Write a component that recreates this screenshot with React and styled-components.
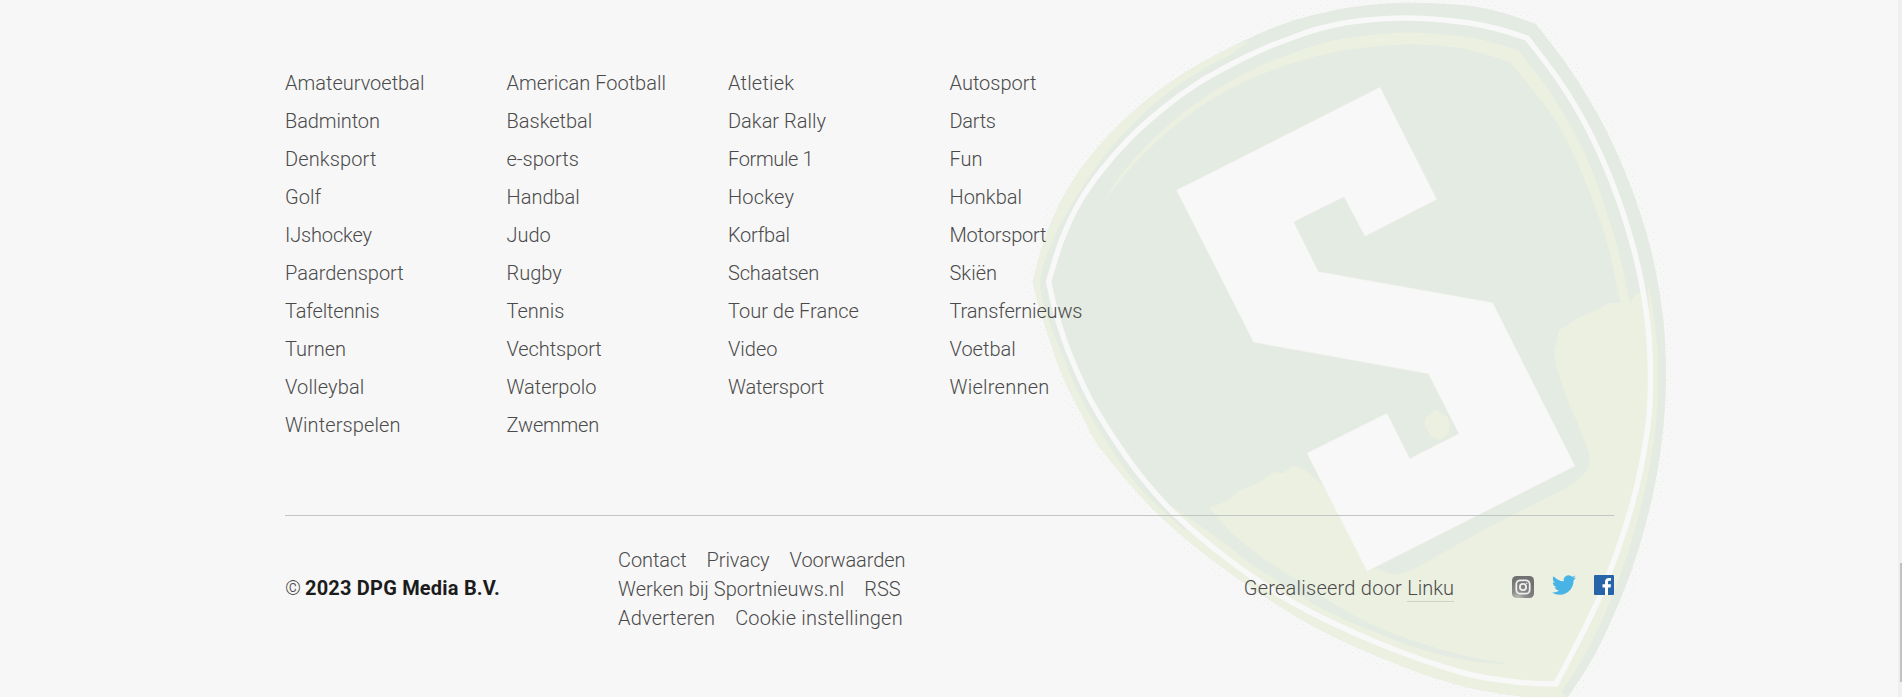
import React from 'react';
import styled, { createGlobalStyle } from 'styled-components';

const GlobalStyle = createGlobalStyle`
  *, *::before, *::after { box-sizing: border-box; }
  html, body { margin: 0; height: 100%; overflow: hidden; background: #f7f7f7; }
`;

const Page = styled.footer`
  position: relative;
  height: 697px;
  overflow: hidden;
  background: #f7f7f7;
  color: #4a4a4a;
  font: 300 20px/38px Roboto, 'Liberation Sans', sans-serif;
`;

const Watermark = styled.svg`
  position: absolute;
  top: 0;
  left: 1000px;
  width: 700px;
  height: 697px;
`;

const Container = styled.div`
  position: relative;
  width: 1329px;
  margin-left: 285px;
  padding-top: 64px;
`;

const Sports = styled.ul`
  display: grid;
  grid-template-columns: repeat(6, 1fr);
  grid-auto-rows: 38px;
  margin: 0;
  padding: 0 0 71px;
  list-style: none;
  border-bottom: 1px solid #c0c6c1;
`;

const SportItem = styled.li`
  grid-column: ${(p) => p.$column};
  white-space: nowrap;
  letter-spacing: ${(p) => p.$track || 0}px;
`;

const Link = styled.a`
  color: inherit;
  text-decoration: none;
`;

const Bottom = styled.div`
  display: flex;
  align-items: flex-start;
  padding-top: 30px;
  line-height: 29px;
`;

const Copyright = styled.div`
  display: flex;
  gap: 4px;
  width: 333px;
  margin-top: 28px;

  span {
    font-size: 20px;
  }

  strong {
    color: #1c1c1c;
    font-weight: 700;
    letter-spacing: 0.2px;
  }
`;

const MetaLinks = styled.nav`
  display: flex;
  flex-direction: column;
  flex: 1;
`;

const MetaRow = styled.div`
  display: flex;
  gap: 20px;
  letter-spacing: ${(p) => p.$track || 0}px;
`;

const Credits = styled.div`
  margin: 28px 58px 0 0;
  letter-spacing: 0.24px;
`;

const CreditLink = styled(Link)`
  display: inline-block;
  height: 28px;
  border-bottom: 1px solid #ccd1c6;
  letter-spacing: 0;
`;

const Socials = styled.div`
  display: flex;
  align-items: flex-start;
  margin-top: 29px;
`;

const SocialIcon = styled.svg`
  display: block;
  width: ${(p) => p.$width}px;
  height: ${(p) => p.$height}px;
  margin-left: ${(p) => p.$gap || 0}px;
  margin-top: ${(p) => p.$drop || 0}px;
`;

const ScrollTrack = styled.div`
  position: absolute;
  top: 0;
  right: 0;
  width: 4px;
  height: 100%;
  padding: 563px 0 0 2px;
  background: #efefef;
`;

const ScrollThumb = styled.div`
  height: 119px;
  background: #c1c1c1;
`;

const columns = [
  ['Amateurvoetbal', 'Badminton', 'Denksport', 'Golf', 'IJshockey', 'Paardensport', 'Tafeltennis', 'Turnen', 'Volleybal', 'Winterspelen'],
  ['American Football', 'Basketbal', 'e-sports', 'Handbal', 'Judo', 'Rugby', 'Tennis', 'Vechtsport', 'Waterpolo', 'Zwemmen'],
  ['Atletiek', 'Dakar Rally', 'Formule 1', 'Hockey', 'Korfbal', 'Schaatsen', 'Tour de France', 'Video', 'Watersport'],
  ['Autosport', 'Darts', 'Fun', 'Honkbal', 'Motorsport', 'Skiën', 'Transfernieuws', 'Voetbal', 'Wielrennen'],
];

const tracking = {
  Tafeltennis: -0.15,
  IJshockey: -0.15,
  Badminton: -0.1,
  Denksport: 0.12,
  Volleybal: 0.15,
  Winterspelen: 0.1,
  Zwemmen: -0.2,
  Vechtsport: -0.1,
  'Formule 1': -0.35,
  Korfbal: -0.25,
  Schaatsen: -0.15,
  Hockey: 0.2,
  Atletiek: 0.2,
  Watersport: -0.2,
  Darts: -0.3,
  Motorsport: -0.2,
  Transfernieuws: -0.15,
  Wielrennen: 0.25,
};

const metaRows = [
  { track: -0.08, links: ['Contact', 'Privacy', 'Voorwaarden'] },
  { track: 0.02, links: ['Werken bij Sportnieuws.nl', 'RSS'] },
  { track: 0.18, links: ['Adverteren', 'Cookie instellingen'] },
];

const sports = columns[0].flatMap((_, row) =>
  columns.flatMap((names, i) => (names[row] ? [{ name: names[row], column: i + 1 }] : [])),
);

/* Smooth curve through the points of one side of the shield */
function side(points) {
  let d = '';
  for (let i = 0; i < points.length - 1; i += 1) {
    const a = points[i];
    const b = points[i + 1];
    const before = points[i - 1] || a;
    const after = points[i + 2] || b;
    const c1 = [a[0] + (b[0] - before[0]) / 6, a[1] + (b[1] - before[1]) / 6];
    const c2 = [b[0] - (after[0] - a[0]) / 6, b[1] - (after[1] - a[1]) / 6];
    d += `C${c1} ${c2} ${b}`;
  }
  return d;
}

const outline = (sides) => `M${sides[0][0]}${sides.map(side).join('')}Z`;

const OUTER = outline([
  [[1032.6, 281.7], [1045, 238], [1063, 197], [1086, 162], [1110, 134], [1136, 109], [1163, 87.5], [1195, 66.5], [1230, 47.5], [1263, 32], [1290, 21.7], [1318, 14], [1356, 6.5], [1404, 2.7], [1462, 5], [1500, 12], [1536, 24]],
  [[1536, 24], [1572, 72], [1605, 128], [1631, 187], [1651, 250], [1663, 317], [1666, 380], [1662, 440], [1651, 503], [1632, 569], [1607, 630], [1587, 668], [1563, 704]],
  [[1563, 704], [1525, 697], [1466, 687], [1399, 665], [1314.6, 627], [1230, 573], [1159, 515], [1102, 450], [1083, 417], [1063, 377], [1048, 335], [1040, 310], [1032.6, 281.7]],
]);
const LINE = outline([
  [[1048.6, 281.7], [1061.7, 240], [1079, 203], [1101, 171], [1130, 138], [1163, 108.5], [1196.7, 84], [1230, 65], [1263, 49], [1290, 38.5], [1318, 29], [1354, 21.5], [1407, 18], [1462, 22], [1496, 28.5], [1527, 38]],
  [[1527, 38], [1560, 82], [1588, 129], [1613, 185], [1634, 250], [1646, 310], [1650.3, 365], [1648, 425], [1632, 505], [1600, 596], [1556, 684]],
  [[1556, 684], [1516.6, 682], [1462, 672.5], [1378, 643], [1293.6, 603], [1230.5, 561], [1175.7, 515], [1140, 475], [1113, 437], [1090, 399], [1070, 355], [1057, 317], [1048.6, 281.7]],
]);
const LEFT_BAND_INNER = side([
  [1250, 40], [1230, 55], [1207, 67], [1173, 89], [1140, 117], [1110, 149], [1087, 180], [1067, 213], [1053, 240], [1040.500, 281], [1048, 318], [1062, 354], [1080, 396], [1104, 438], [1140, 488], [1184, 530],
]);
const CRESCENT = outline([
  [[1102.7, 203], [1120, 176], [1147, 145], [1173, 121], [1197, 102.500], [1230, 81.500], [1263, 64.500], [1290, 54], [1322, 43.500], [1357, 36.500], [1411, 32.500], [1466, 37], [1493, 42.500], [1518, 50]],
  [[1518, 50], [1544, 83], [1568, 121], [1589, 163], [1606, 210], [1621, 261], [1632, 318], [1624, 320]],
  [[1624, 320], [1609, 250], [1596, 209], [1580, 169], [1563, 134], [1546, 107], [1510, 62]],
  [[1510, 62], [1462, 48.500], [1411, 44.500], [1357, 48.500], [1322, 55], [1290, 64], [1263, 74], [1230, 89], [1197, 109], [1163, 136], [1130, 169], [1102.700, 203]],
]);

function ShieldWatermark() {
  return (
    <Watermark viewBox="1000 0 700 697" aria-hidden="true">
      <defs>
        <pattern id="grain" width="7" height="7" patternUnits="userSpaceOnUse">
          <rect x="1" y="1" width="1" height="1" fill="#e9ede8" />
          <rect x="4" y="5" width="1" height="1" fill="#ebeee9" />
        </pattern>
        <clipPath id="shield"><path d={OUTER} /></clipPath>
        <clipPath id="field"><path d={LINE} /></clipPath>
      </defs>
      <path d={OUTER} fill="none" stroke="url(#grain)" strokeWidth="18" />
      <path d={OUTER} fill="#e3ebe2" />
      <g clipPath="url(#shield)" fill="#ebf0e0">
        <path d={`M1250 40${LEFT_BAND_INNER}L1194 524C1280 610 1400 672 1556 684L1566 697L1500 720L1000 697V20H1200L1215 52Z`} />
        <path d="M1648 283C1656 318 1659 355 1658 390C1657 430 1652 462 1641 507C1623 580 1593 650 1561 692L1500 695L1480 670L1556 684L1630 513L1650 373Z" />
      </g>
      <g clipPath="url(#field)">
        <path d={CRESCENT} fill="#ebf0e0" />
        <path d="M1660 289L1637 293L1629 303L1609 303L1595 311L1580 317L1559 330L1557 340L1554.500 350C1555 364 1558 374 1563 387C1568 404 1576 418 1580 430L1588 450C1592 462 1588 471 1580 478C1570 487 1558 492 1546 498L1483 530L1430 560C1414 570 1401 575 1392 574L1375 568L1367 571L1350 535L1331 497C1325 488 1320 482 1314 478L1305 470L1293 465L1284 473L1272 472L1260 482L1239 491L1225 502L1209 508L1192 520L1170 505V700H1660Z" fill="#ebf0e0" />
        <path d="M1175 505C1190 494 1200 500 1209 508C1218 517 1224 526 1235 536C1253 551 1273 566 1294 578C1315 591 1335 606 1357 617C1377 628 1399 636 1420 643C1447 652 1478 659 1508 664C1484 664 1462 660 1441 655C1418 649 1399 642 1378 633C1356 625 1336 616 1315 605C1300 596 1287 587 1272 577C1255 568 1243 558 1230 547C1215 536 1204 529 1192 520Z" fill="#e3ebe2" />
        <path d="M1436 409L1441 414L1447 416L1450 425L1449 433L1441 440L1431 436L1425 426L1425 418L1431 414Z" fill="#ebf0e0" />
      </g>
      <path d={LINE} fill="none" stroke="#f8f8f8" strokeWidth="5.500" />
      <path d="M1380 87.200L1436.700 199.300L1365 236.300L1344 196.700L1293.600 221.700L1318.400 271.700L1492.600 302.700L1575 466L1367.200 571.300L1307 453.300L1387 413.300L1409.700 458.700L1459 433.700L1428.300 373.700L1253.600 342.300L1176.600 190.300Z" fill="#f8f8f8" stroke="#f1f4eb" strokeWidth=".6" />
    </Watermark>
  );
}

function InstagramIcon() {
  return (
    <SocialIcon viewBox="0 0 22 22" $width={22} $height={22} $drop={1}>
      <defs>
        <radialGradient id="insta" cx=".25" cy="1.05" r=".95">
          <stop offset="0" stopColor="#c4c4c2" />
          <stop offset=".4" stopColor="#8b8b8a" />
          <stop offset="1" stopColor="#717171" />
        </radialGradient>
      </defs>
      <rect width="22" height="22" rx="4.500" fill="url(#insta)" />
      <rect x="4.300" y="4.300" width="13.400" height="13.400" rx="4" fill="none" stroke="#eee" strokeWidth="1.800" />
      <circle cx="11" cy="11" r="3.100" fill="none" stroke="#eee" strokeWidth="1.800" />
      <circle cx="14.800" cy="7.300" r=".8" fill="#eee" />
    </SocialIcon>
  );
}

function TwitterIcon() {
  return (
    <SocialIcon viewBox="0 2 24 20" $width={24} $height={20} $gap={18}>
      <path fill="#47b4e5" d="M23.950 4.570a10 10 0 0 1-2.820.77 4.960 4.960 0 0 0 2.160-2.720c-.95.550-2 .95-3.130 1.180a4.920 4.920 0 0 0-8.380 4.480C7.690 8.100 4.070 6.130 1.640 3.160a4.920 4.920 0 0 0 1.520 6.570 4.900 4.900 0 0 1-2.230-.61v.06a4.920 4.920 0 0 0 3.950 4.830 5 5 0 0 1-2.210.08 4.940 4.940 0 0 0 4.600 3.420A9.870 9.870 0 0 1 0 19.540a14 14 0 0 0 7.550 2.210c9.050 0 14-7.500 14-13.980 0-.21 0-.42-.02-.63a9.900 9.900 0 0 0 2.420-2.570Z" />
    </SocialIcon>
  );
}

function FacebookIcon() {
  return (
    <SocialIcon viewBox="0 0 20 20" $width={20} $height={20} $gap={18}>
      <rect width="20" height="20" rx="1" fill="#2864a9" />
      <path fill="#fff" d="M11 20v-7.600H8.500V9.300H11V7c0-2.600 1.500-4 3.800-4 1 0 1.900.1 2.200.1v2.700h-1.500c-1.200 0-1.500.6-1.500 1.500v2h3l-.4 3.100H14V20Z" />
    </SocialIcon>
  );
}

export default function App() {
  return (
    <>
      <GlobalStyle />
      <Page>
        <ShieldWatermark />
        <Container>
          <Sports>
            {sports.map(({ name, column }) => (
              <SportItem key={name} $column={column} $track={tracking[name]}>
                <Link>{name}</Link>
              </SportItem>
            ))}
          </Sports>
          <Bottom>
            <Copyright>
              <span>©</span>
              <strong>2023 DPG Media B.V.</strong>
            </Copyright>
            <MetaLinks>
              {metaRows.map(({ track, links }) => (
                <MetaRow key={links[0]} $track={track}>
                  {links.map((label) => <Link key={label}>{label}</Link>)}
                </MetaRow>
              ))}
            </MetaLinks>
            <Credits>
              Gerealiseerd door <CreditLink>Linku</CreditLink>
            </Credits>
            <Socials>
              <InstagramIcon />
              <TwitterIcon />
              <FacebookIcon />
            </Socials>
          </Bottom>
        </Container>
        <ScrollTrack>
          <ScrollThumb />
        </ScrollTrack>
      </Page>
    </>
  );
}
